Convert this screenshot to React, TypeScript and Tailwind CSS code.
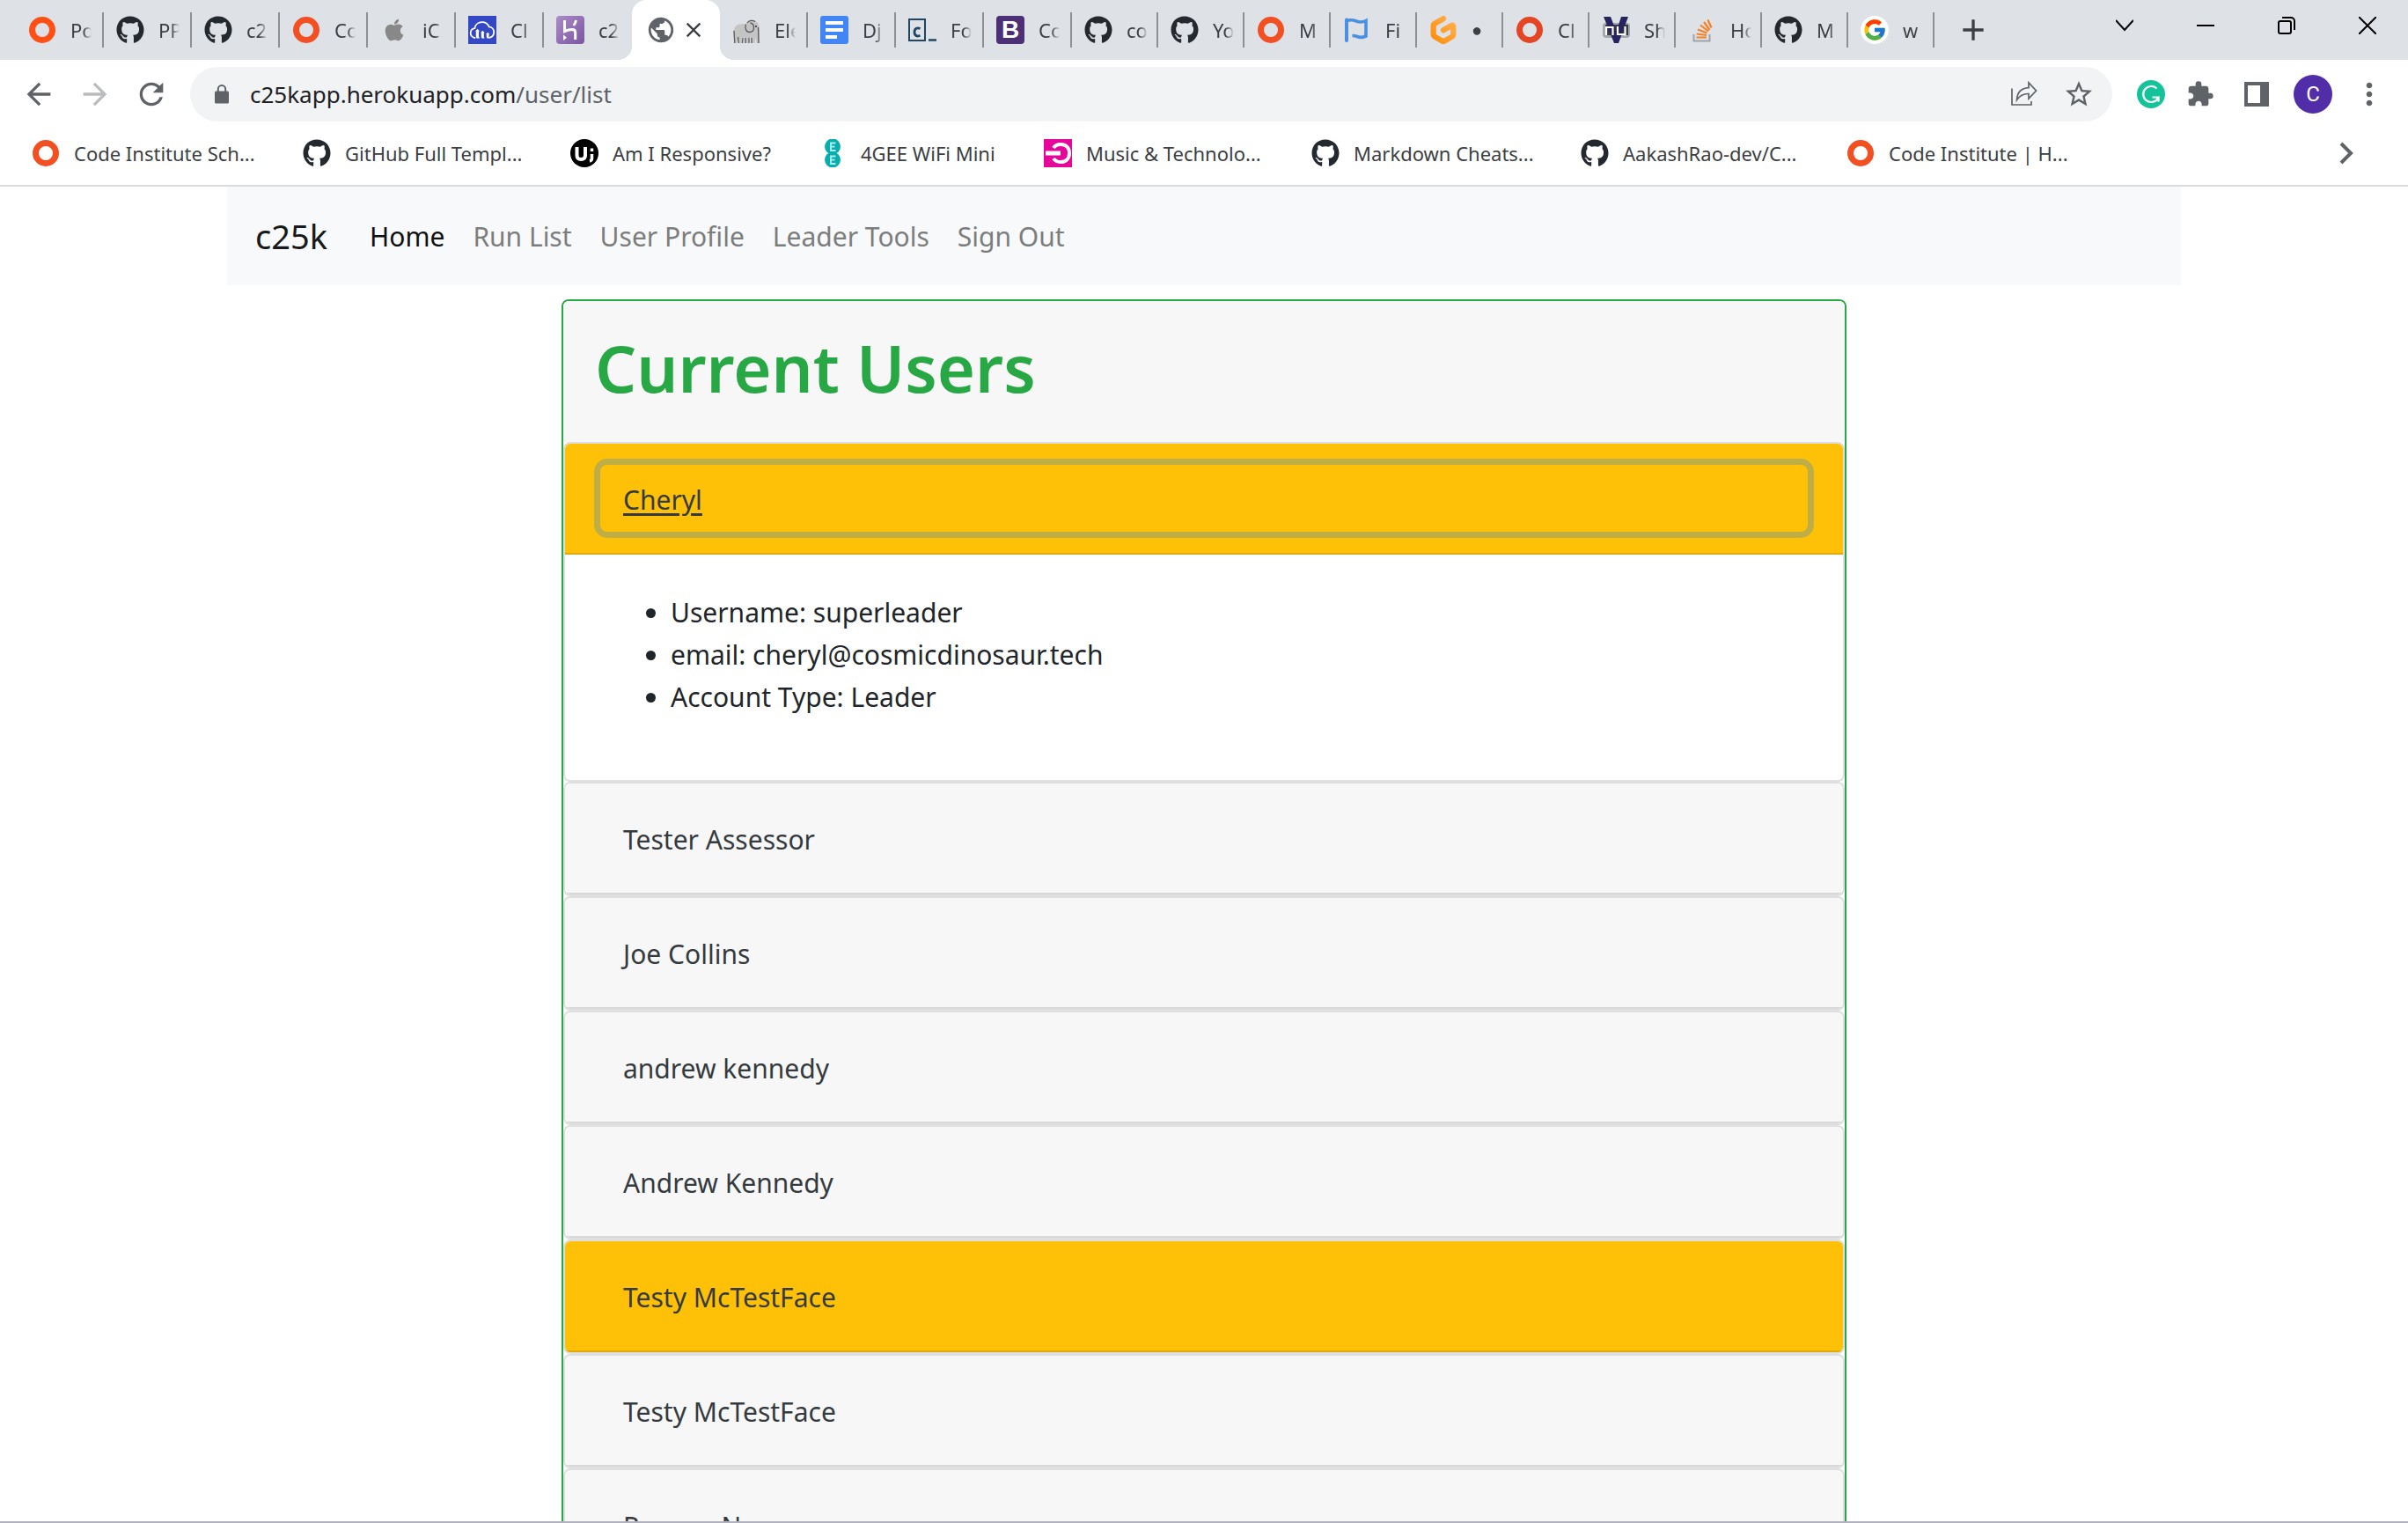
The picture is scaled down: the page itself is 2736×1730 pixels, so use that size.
import { useState } from "react";
import type { ReactNode } from "react";
import { FaApple, FaGithub } from "react-icons/fa";
import { FcGoogle } from "react-icons/fc";
import {
  MdAdd,
  MdArrowBack,
  MdArrowForward,
  MdClose,
  MdExtension,
  MdMoreVert,
  MdPublic,
  MdRefresh,
  MdStarBorder,
} from "react-icons/md";
import { SiGitpod } from "react-icons/si";

function Ring({ color = "#f25022" }: { color?: string }) {
  return (
    <svg viewBox="0 0 32 32" className="size-8">
      <circle cx="16" cy="16" r="11.5" fill="none" stroke={color} strokeWidth="7" />
    </svg>
  );
}

function GitHub() {
  return <FaGithub className="size-8 text-[#24292f]" />;
}

function Cloudinary() {
  return (
    <svg viewBox="0 0 32 32" className="size-8">
      <rect width="32" height="32" fill="#3448c5" />
      <path
        d="M7.5 25C4.500 24.500 2.500 22 2.700 19.200c.2-2.600 2-4.700 4.600-5.100C8 10 11.500 7.200 15.700 7.200c3.600 0 6.600 2 7.900 5.200 3.300.3 5.600 2.900 5.600 6.200 0 2.800-1.700 5.200-4.400 6.100"
        fill="none"
        stroke="#fff"
        strokeWidth="1.800"
        strokeLinecap="round"
      />
      <path d="M8 17.500l2.500-2.800 2.500 2.800h-1v6l1 2H9.500l-.7-2v-6zM14 19.300l2.400-2.600 2.400 2.600h-1v4.700l1 1.500h-3.300l-.7-1.500v-4.700zM20 21l2.200-2.300 2.200 2.300h-.9v3l.9 1.500h-3l-.6-1.500v-3z" fill="#fff" />
    </svg>
  );
}

function Heroku() {
  return (
    <svg viewBox="0 0 32 32" className="size-8">
      <defs>
        <linearGradient id="heroku" x1="0" y1="0" x2="1" y2="1">
          <stop offset="0" stopColor="#ab8bc9" />
          <stop offset="1" stopColor="#7a569f" />
        </linearGradient>
      </defs>
      <rect width="32" height="32" rx="4" fill="url(#heroku)" />
      <path d="M9.500 5v12.500c3-1.300 6-2 8.500-2 3.200 0 3.700 1.700 3.700 3.500v8" fill="none" stroke="#fff" strokeWidth="3" />
      <path d="M22.500 5c-.3 2.200-1.400 4.200-2.800 6" fill="none" stroke="#fff" strokeWidth="2.800" />
      <path d="M8 21.500l4 3.200-4 3.300z" fill="#fff" />
    </svg>
  );
}

function Elephant() {
  return (
    <svg viewBox="0 0 32 32" className="size-8">
      <path d="M1.500 18c0-5 3-8 8-8.500 3-.3 4 0 6 0C17 6 20 4.500 23 5c5 .5 8 4 8 10v16h-3.500l-1-7-1 7h-4l-.5-6h-2.500l-.5 6h-4l-.5-6.500h-2L11 31H7l-.5-6L5 31H2.500z" fill="#c4c4c4" />
      <path d="M15.500 9.500c-1.500 5 .5 9 4 9s5-2 5-5-1.500-5-4-5.500M29.500 13l.5 18M2 17l.8 14M6.500 24l.7 7M12 25l-.5 6M15 25v6M19 25v6M22 25v6M17 8c2-3 6-3.500 9-1.500" fill="none" stroke="#5b5b5b" strokeWidth="1.300" />
      <circle cx="27" cy="12" r="1.100" fill="#333" />
    </svg>
  );
}

function Docs() {
  return (
    <svg viewBox="0 0 32 32" className="size-8">
      <rect width="32" height="32" rx="3" fill="#4285f4" />
      <path d="M6 8h20M6 16h20M6 24h13" stroke="#fff" strokeWidth="4" />
    </svg>
  );
}

function Crispy() {
  return (
    <svg viewBox="0 0 32 32" className="size-8">
      <rect x="1" y="4" width="18" height="24" fill="none" stroke="#1f4663" strokeWidth="2" />
      <path d="M13.500 14.500c-3-1.500-6.500-.5-6.500 4s3.500 5.200 6.500 3.800" fill="none" stroke="#1f4663" strokeWidth="2.800" />
      <path d="M23 27.500h9" stroke="#1f4663" strokeWidth="2.500" />
    </svg>
  );
}

function Bootstrap() {
  return (
    <span className="flex size-8 items-center justify-center rounded bg-[#4c2f74] font-['Liberation_Sans',sans-serif] text-[28px] leading-8 font-bold text-white">
      B
    </span>
  );
}

function Flag() {
  return (
    <svg viewBox="0 0 32 32" className="size-8">
      <path d="M4 28V4.500" stroke="#4a90e2" strokeWidth="4" strokeLinecap="round" />
      <path
        d="M4 6c4-2.200 7-1.500 11 0 4 1.500 7 1.500 11-.5v17.500c-4 1.800-7 1.800-10 .5-2.200-1-3.500-1-5.500-1"
        fill="none"
        stroke="#4a90e2"
        strokeWidth="3.600"
      />
    </svg>
  );
}

function Gitpod() {
  return (
    <>
      <svg className="absolute size-0">
        <defs>
          <linearGradient id="gitpod" x1="1" y1="0" x2="0" y2="1">
            <stop offset="0" stopColor="#ffb45b" />
            <stop offset="1" stopColor="#ff8a00" />
          </linearGradient>
        </defs>
      </svg>
      <SiGitpod className="size-8 fill-[url(#gitpod)]" />
    </>
  );
}

function NuValidator() {
  return (
    <svg viewBox="0 0 32 32" className="size-8">
      <rect x="1" y="8" width="31" height="17" rx="4" fill="#a3a6ab" />
      <rect x="4" y="10" width="26" height="12" fill="#3a3a44" />
      <path d="M2 1h8l6.500 17L22 1h8L19 31h-5z" fill="#26235f" />
      <path d="M5 22v-9h7.500v9M18 12v9h8.500v-9M26.500 21v1.500" fill="none" stroke="#fff" strokeWidth="2.200" />
    </svg>
  );
}

function StackOverflow() {
  return (
    <svg viewBox="0 0 32 32" className="size-8">
      <path d="M6.500 21v7.500h18V21" fill="none" stroke="#9fa3a7" strokeWidth="2" />
      <path d="M9.500 24.500H21M9.700 20.500l11.300 1.500M11 15.500l10.500 4M14 10.500l9 7M18 7l6.500 9M22.500 4.500l4 9" stroke="#f48024" strokeWidth="2.200" />
    </svg>
  );
}

function Google() {
  return (
    <span className="flex size-8 items-center justify-center rounded-full bg-white">
      <FcGoogle className="size-7" />
    </span>
  );
}

function Responsive() {
  return (
    <svg viewBox="0 0 32 32" className="size-8">
      <circle cx="16" cy="16" r="16" fill="#000" />
      <path d="M7.500 9v9.500c0 3.300 1.500 4.500 4.700 4.500s4.800-1.200 4.800-4.500V9" fill="none" stroke="#fff" strokeWidth="4" />
      <path d="M24.500 10.500v3.500M24.500 17v5c0 1.800-.7 2.600-2.500 3" fill="none" stroke="#fff" strokeWidth="3.500" />
    </svg>
  );
}

function EE() {
  return (
    <svg viewBox="0 0 32 32" className="size-8">
      <circle cx="16" cy="8.500" r="9" fill="#07aeae" />
      <circle cx="16" cy="23.500" r="9" fill="#07aeae" />
      <path d="M19.500 4.500H14v8.500h5.500M14 8.700h4.500M19.500 19.500H14V28h5.500M14 23.700h4.500" fill="none" stroke="#b5f0ee" strokeWidth="1.800" />
    </svg>
  );
}

function Music() {
  return (
    <svg viewBox="0 0 32 32" className="size-8">
      <rect width="32" height="32" fill="#e6079a" />
      <path d="M11 10c2-3 5-4 8-4 6 0 10 4 10 10s-4 10-10 10c-3 0-6-1-8-4" fill="none" stroke="#fff" strokeWidth="4" />
      <path d="M2 16h17" stroke="#fff" strokeWidth="5" />
    </svg>
  );
}

function Lock() {
  return (
    <svg viewBox="0 0 24 24" className="size-6 shrink-0">
      <rect x="4" y="8.500" width="16" height="14" rx="1.500" fill="#5f6368" />
      <path d="M7.800 9V6.200a4.200 4.200 0 0 1 8.400 0V9" fill="none" stroke="#5f6368" strokeWidth="2" />
    </svg>
  );
}

function Share() {
  return (
    <svg viewBox="0 0 32 32" className="size-8" fill="none" stroke="#5f6368" strokeWidth="1.700">
      <path d="M2 9.500V28h22v-4" />
      <path d="M7.500 22.500C8 14 12.500 9.200 21 8.700V3l8.500 9-8.500 9v-5.500c-6-.3-10 2-13.500 7z" />
    </svg>
  );
}

function Grammarly() {
  return (
    <svg viewBox="0 0 32 32" className="size-8">
      <circle cx="16" cy="16" r="16" fill="#15c39a" />
      <path d="M22.500 9.500A9 9 0 1 0 24.500 19.500H17.500M24.500 19v5.500" fill="none" stroke="#fff" strokeWidth="2.200" />
    </svg>
  );
}

type Tab = { icon: ReactNode; title: string };

const wideTabs: Tab[] = [
  { icon: <Ring color="#ff5016" />, title: "Po" },
  { icon: <GitHub />, title: "PP" },
  { icon: <GitHub />, title: "c2" },
  { icon: <Ring />, title: "Co" },
  { icon: <FaApple className="size-8 p-0.5 text-[#888888]" />, title: "iC" },
  { icon: <Cloudinary />, title: "Cl" },
  { icon: <Heroku />, title: "c2" },
];

const middleTabs: Tab[] = [
  { icon: <Elephant />, title: "Ele" },
  { icon: <Docs />, title: "Dj" },
  { icon: <Crispy />, title: "Fo" },
  { icon: <Bootstrap />, title: "Co" },
];

const narrowTabs: Tab[] = [
  { icon: <GitHub />, title: "co" },
  { icon: <GitHub />, title: "Yo" },
  { icon: <Ring />, title: "M" },
  { icon: <Flag />, title: "Fi" },
  { icon: <Gitpod />, title: "●" },
  { icon: <Ring color="#e44524" />, title: "Cl" },
  { icon: <NuValidator />, title: "Sh" },
  { icon: <StackOverflow />, title: "Ho" },
  { icon: <GitHub />, title: "M" },
  { icon: <Google />, title: "w" },
];

const bookmarks = [
  { icon: <Ring />, label: "Code Institute Sch...", width: "w-[308px]" },
  { icon: <GitHub />, label: "GitHub Full Templ...", width: "w-[304px]" },
  { icon: <Responsive />, label: "Am I Responsive?", width: "w-[282px]" },
  { icon: <EE />, label: "4GEE WiFi Mini", width: "w-[256px]" },
  { icon: <Music />, label: "Music & Technolo...", width: "w-[304px]" },
  { icon: <GitHub />, label: "Markdown Cheats...", width: "w-[306px]" },
  { icon: <GitHub />, label: "AakashRao-dev/C...", width: "w-[302px]" },
  { icon: <Ring />, label: "Code Institute | H...", width: "w-[304px]" },
];

const navLinks = ["Home", "Run List", "User Profile", "Leader Tools", "Sign Out"];

type User = { name: string; leader?: boolean; details?: string[] };

const users: User[] = [
  {
    name: "Cheryl",
    leader: true,
    details: ["Username: superleader", "email: cheryl@cosmicdinosaur.tech", "Account Type: Leader"],
  },
  { name: "Tester Assessor" },
  { name: "Joe Collins" },
  { name: "andrew kennedy" },
  { name: "Andrew Kennedy" },
  { name: "Testy McTestFace", leader: true },
  { name: "Testy McTestFace" },
  { name: "Runner Name" },
];

function BrowserTab({ tab, narrow, last }: { tab: Tab; narrow?: boolean; last?: boolean }) {
  return (
    <button
      className={`flex h-10 shrink-0 items-center border-r-2 pl-3.5 text-left ${narrow ? "w-[98px]" : "w-[100px]"} ${
        last ? "border-transparent" : "border-[#8d9095]"
      }`}
    >
      {tab.icon}
      <span
        className={`ml-4 w-6 overflow-hidden whitespace-nowrap text-[#3c4043] [mask-image:linear-gradient(to_right,black_60%,transparent)] ${
          tab.title === "●" ? "text-xl" : "text-[22px]"
        }`}
      >
        {tab.title}
      </span>
    </button>
  );
}

function TabStrip() {
  return (
    <div className="flex h-[68px] items-center bg-[#dee1e6] pl-[18px]">
      {wideTabs.map((tab, i) => (
        <BrowserTab key={i} tab={tab} last={i === wideTabs.length - 1} />
      ))}
      <div className="relative flex h-[68px] w-[100px] shrink-0 items-center justify-center gap-1.5 rounded-t-[16px] bg-white">
        <span className="absolute bottom-0 -left-4 size-4 bg-[radial-gradient(circle_at_0_0,transparent_16px,white_16px)]" />
        <span className="absolute -right-4 bottom-0 size-4 bg-[radial-gradient(circle_at_100%_0,transparent_16px,white_16px)]" />
        <MdPublic className="size-[34px] text-[#5f6368]" />
        <button aria-label="Close tab">
          <MdClose className="size-7 text-[#3c4043]" />
        </button>
      </div>
      {middleTabs.map((tab, i) => (
        <BrowserTab key={i} tab={tab} />
      ))}
      {narrowTabs.map((tab, i) => (
        <BrowserTab key={i} tab={tab} narrow />
      ))}
      <button aria-label="New tab" className="ml-6">
        <MdAdd className="size-10 text-[#3c4043]" />
      </button>
      <div className="ml-auto flex h-full items-start">
        <button aria-label="Search tabs" className="flex h-[58px] w-[92px] items-center justify-center">
          <svg viewBox="0 0 20 20" className="size-5" fill="none" stroke="#000" strokeWidth="2">
            <path d="M0 4l10 11L20 4" />
          </svg>
        </button>
        <button aria-label="Minimize" className="flex h-[58px] w-[92px] items-center justify-center">
          <svg viewBox="0 0 20 20" className="size-5" stroke="#000" strokeWidth="2">
            <path d="M0 10h20" />
          </svg>
        </button>
        <button aria-label="Restore" className="flex h-[58px] w-[92px] items-center justify-center">
          <svg viewBox="0 0 20 20" className="size-5" fill="none" stroke="#000" strokeWidth="2">
            <rect x="1" y="5" width="14" height="14" rx="2" />
            <path d="M5 1h10a4 4 0 0 1 4 4v10" />
          </svg>
        </button>
        <button aria-label="Close" className="flex h-[58px] w-[92px] items-center justify-center">
          <svg viewBox="0 0 20 20" className="size-5" stroke="#000" strokeWidth="2">
            <path d="M0 0l20 20M20 0L0 20" />
          </svg>
        </button>
      </div>
    </div>
  );
}

function Toolbar() {
  return (
    <div className="flex items-center bg-white pt-2 pr-6 pl-6">
      <button aria-label="Back">
        <MdArrowBack className="size-10 text-[#5f6368]" />
      </button>
      <button aria-label="Forward" className="ml-6">
        <MdArrowForward className="size-10 text-[#babcbe]" />
      </button>
      <button aria-label="Reload" className="ml-6">
        <MdRefresh className="size-10 text-[#5f6368]" />
      </button>
      <div className="ml-6 flex h-[62px] flex-1 items-center rounded-full bg-[#f1f3f4] pr-5 pl-6">
        <Lock />
        <div role="textbox" aria-label="Address" className="ml-5 flex-1 text-[26px] leading-8 text-[#202124]">
          c25kapp.herokuapp.com<span className="text-[#5f6368]">/user/list</span>
        </div>
        <button aria-label="Share this page">
          <Share />
        </button>
        <button aria-label="Bookmark this tab" className="ml-7">
          <MdStarBorder className="size-9 text-[#5f6368]" />
        </button>
      </div>
      <button aria-label="Grammarly" className="ml-7">
        <Grammarly />
      </button>
      <button aria-label="Extensions" className="ml-6">
        <MdExtension className="size-8 text-[#5f6368]" />
      </button>
      <button aria-label="Side panel" className="ml-[34px]">
        <svg viewBox="0 0 28 28" className="size-7">
          <path fillRule="evenodd" d="M0 0h28v28H0zM4 4v20h14V4z" fill="#5f6368" />
        </svg>
      </button>
      <button
        aria-label="Profile"
        className="ml-7 flex size-11 items-center justify-center rounded-full bg-[#512da8] font-[Roboto] text-2xl text-white"
      >
        C
      </button>
      <button aria-label="Menu" className="ml-[22px]">
        <MdMoreVert className="size-10 text-[#5f6368]" />
      </button>
    </div>
  );
}

function BookmarksBar() {
  return (
    <div className="flex h-[74px] items-center border-b-2 border-[#dadce0] bg-white pr-15 pl-9">
      {bookmarks.map((b) => (
        <a key={b.label} href="#" className={`flex shrink-0 items-center gap-4 text-[22px] whitespace-nowrap text-[#3c4043] ${b.width}`}>
          {b.icon}
          {b.label}
        </a>
      ))}
      <button aria-label="More bookmarks" className="ml-auto">
        <svg viewBox="0 0 20 28" className="h-7 w-5" fill="none" stroke="#5f6368" strokeWidth="4">
          <path d="M4 3l11 11L4 25" />
        </svg>
      </button>
    </div>
  );
}

function UserCard({ user, open, onToggle }: { user: User; open: boolean; onToggle: () => void }) {
  return (
    <div className="shrink-0 overflow-hidden rounded-lg border-2 border-[#dfdfdf]">
      <h2 className={`border-b-2 px-10 py-6 ${user.leader ? "border-[#dfa90a] bg-[#ffc107]" : "border-[#d8d8d8] bg-[#f7f7f7]"}`}>
        <button
          onClick={onToggle}
          aria-expanded={open}
          className={`block w-full rounded-lg border-2 border-transparent px-6 pt-3.5 pb-2.5 text-left leading-12 text-[#343a40] outline-none ${
            open ? "underline decoration-3 underline-offset-4 shadow-[0_0_0_7px_#bfae46]" : ""
          }`}
        >
          {user.name}
        </button>
      </h2>
      {open && user.details && (
        <div className="bg-white px-10 pt-[42px] pb-[38px]">
          <ul className="mb-8 list-disc pl-20 leading-12">
            {user.details.map((d) => (
              <li key={d}>{d}</li>
            ))}
          </ul>
        </div>
      )}
    </div>
  );
}

export default function App() {
  const [openIndex, setOpenIndex] = useState(0);
  return (
    <div className="flex h-screen flex-col overflow-hidden border-b-2 border-[#b2b2be] bg-white font-['Noto_Sans','Open_Sans',sans-serif] text-[30px] text-[#212529]">
      <header className="shrink-0">
        <TabStrip />
        <Toolbar />
        <BookmarksBar />
      </header>
      <main className="min-h-0 flex-1 overflow-hidden px-8">
        <nav className="mx-auto flex h-28 max-w-[2220px] items-center bg-[#f8f9fa] px-8">
          <a href="#" className="mr-8 text-[38px] text-[#18191a]">
            c25k
          </a>
          {navLinks.map((label, i) => (
            <a key={label} href="#" className={`px-4 ${i === 0 ? "text-[#101010]" : "text-[#7c7d7d]"}`}>
              {label}
            </a>
          ))}
        </nav>
        <section className="mx-auto mt-4 max-w-[1460px] overflow-hidden rounded-lg border-2 border-[#28a745]">
          <div className="bg-[#f7f7f7] px-9 pt-7 pb-9">
            <h1 className="text-[74px] leading-24 font-semibold text-[#28a745]">Current Users</h1>
          </div>
          <div className="flex flex-col">
            {users.map((user, i) => (
              <UserCard key={i} user={user} open={openIndex === i} onToggle={() => setOpenIndex(openIndex === i ? -1 : i)} />
            ))}
          </div>
        </section>
      </main>
    </div>
  );
}
